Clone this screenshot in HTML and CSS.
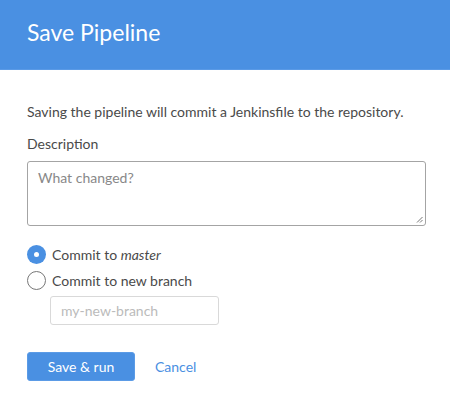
FILE: index.html
```html
<!DOCTYPE html>
<html>
<head>
<meta charset="utf-8">
<link rel="stylesheet" href="styles.css">
</head>
<body>
<div class="dialog">
  <header class="header"><h1 class="title">Save Pipeline</h1></header>
  <div class="content">
    <p class="intro">Saving the pipeline will commit a Jenkinsfile to the repository.</p>
    <label class="label">Description</label>
    <div class="textarea"><span class="placeholder">What changed?</span><svg class="grip" width="7" height="7" viewBox="0 0 7 7"><path d="M6.5 1 L1 6.5 M6.5 4 L4 6.5" stroke="#777" stroke-width="1"/></svg></div>
    <div class="radios">
      <div class="radio-row"><span class="radio checked"></span><span>Commit to <em>master</em></span></div>
      <div class="radio-row"><span class="radio"></span><span>Commit to new branch</span></div>
      <div class="branch"><span class="branch-ph">my-new-branch</span></div>
    </div>
    <div class="actions">
      <button class="btn-primary">Save &amp; run</button>
      <button class="btn-link">Cancel</button>
    </div>
  </div>
</div>
</body>
</html>
```
FILE: styles.css
```css
* { box-sizing: border-box; }
body { margin: 0; font-family: Lato, "Open Sans", sans-serif; color: #4a4a4a; background: #fff; }
.header { background: #4a90e2; height: 70px; padding: 0 27px; display: flex; align-items: center; border-bottom: 1px solid #5a9ae6; }
.title { margin: 0; font-weight: 400; font-size: 23px; color: #fff; padding-bottom: 6px; }
.content { padding: 0 24px 0 27px; }
.intro { margin: 32px 0 0; font-size: 14px; line-height: 20px; }
.label { display: block; margin-top: 12px; font-size: 14px; line-height: 20px; }
.textarea { position: relative; margin-top: 7px; height: 65px; border: 1px solid #a4a4a4; border-radius: 3px; padding: 5px 10px; }
.placeholder { font-size: 14px; color: #888; line-height: 20px; }
.grip { position: absolute; right: 2px; bottom: 2px; }
.radios { margin-top: 15px; }
.radio-row { display: flex; align-items: center; gap: 6px; height: 26px; font-size: 14px; }
.radio { width: 19px; height: 19px; border-radius: 50%; border: 1px solid #777; flex: none; background: #fff; }
.radio.checked { border: none; background: #4a90e2; position: relative; }
.radio.checked::after { content: ""; position: absolute; left: 7px; top: 7px; width: 5px; height: 5px; border-radius: 50%; background: #fff; }
.branch { margin: 3px 0 0 23px; width: 169px; height: 29px; border: 1px solid #d9d9d9; border-radius: 3px; padding: 0 10px; display: flex; align-items: center; }
.branch-ph { font-size: 14px; color: #bbb; }
.actions { margin-top: 27px; display: flex; align-items: center; gap: 20px; }
.btn-primary { width: 108px; height: 29px; background: #4a90e2; color: #fff; border: 1px solid #5b9be6; border-radius: 3px; font-family: inherit; font-size: 14px; }
.btn-link { background: none; border: none; padding: 0; color: #4a90e2; font-family: inherit; font-size: 14px; }
```
